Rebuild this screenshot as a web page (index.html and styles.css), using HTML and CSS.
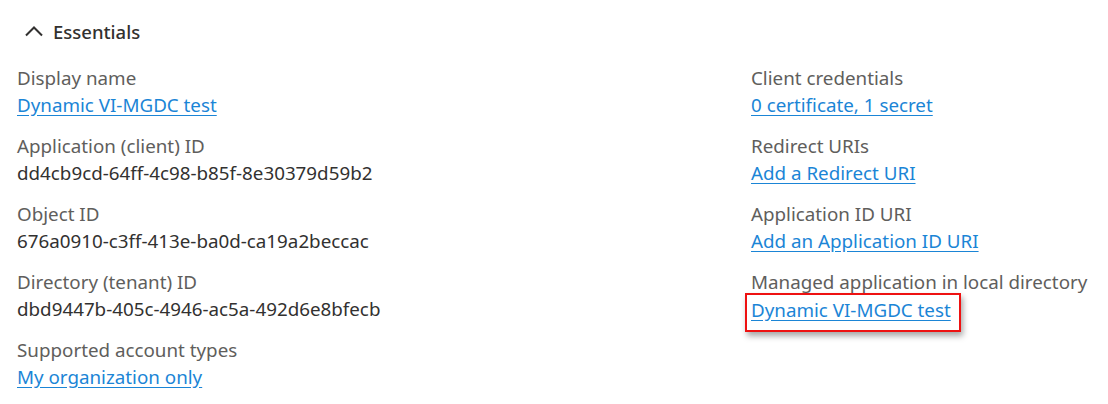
FILE: index.html
```html
<!DOCTYPE html>
<html>
<head>
<meta charset="utf-8">
<link rel="stylesheet" href="styles.css">
</head>
<body>
<div class="panel">
  <div class="header">
    <svg class="chev" width="20" height="12" viewBox="0 0 20 12"><path d="M2 10.5 L10 2.5 L18 10.5" fill="none" stroke="#323130" stroke-width="2"/></svg>
    <span class="title">Essentials</span>
  </div>
  <div class="grid">
    <div class="col">
      <div class="item"><div class="label">Display name</div><a class="link" href="#">Dynamic VI-MGDC test</a></div>
      <div class="item"><div class="label">Application (client) ID</div><div class="value">dd4cb9cd-64ff-4c98-b85f-8e30379d59b2</div></div>
      <div class="item"><div class="label">Object ID</div><div class="value">676a0910-c3ff-413e-ba0d-ca19a2beccac</div></div>
      <div class="item"><div class="label">Directory (tenant) ID</div><div class="value">dbd9447b-405c-4946-ac5a-492d6e8bfecb</div></div>
      <div class="item"><div class="label">Supported account types</div><a class="link" href="#">My organization only</a></div>
    </div>
    <div class="col">
      <div class="item"><div class="label">Client credentials</div><a class="link" href="#">0 certificate, 1 secret</a></div>
      <div class="item"><div class="label">Redirect URIs</div><a class="link" href="#">Add a Redirect URI</a></div>
      <div class="item"><div class="label">Application ID URI</div><a class="link" href="#">Add an Application ID URI</a></div>
      <div class="item"><div class="label">Managed application in local directory</div><span class="highlight"><a class="link" href="#">Dynamic VI-MGDC test</a></span></div>
    </div>
  </div>
</div>
</body>
</html>
```
FILE: styles.css
```css
html, body { margin: 0; padding: 0; background: #fff; }
body { font-family: "Noto Sans", "Open Sans", sans-serif; font-size: 18.8px; color: #323130; }
.panel { padding: 18px 0 0 17px; }
.header { display: flex; align-items: center; height: 26px; padding-left: 7px; gap: 9px; }
.chev { display: block; }
.title { font-size: 18.5px; font-weight: 500; color: #323130; }
.grid { display: grid; grid-template-columns: 734px 1fr; margin-top: 21px; }
.col { display: flex; flex-direction: column; gap: 14px; }
.item { display: flex; flex-direction: column; align-items: flex-start; }
.label { color: #605e5c; line-height: 27px; height: 27px; }
.value { color: #323130; line-height: 27px; height: 27px; }
.link { color: #1b85d6; text-decoration: underline; line-height: 27px; height: 27px; text-underline-offset: 3px; }
.highlight { display: inline-block; margin-left: -6px; margin-top: -3px; padding: 2px 8px 6px 4px; border: 2px solid #ee1111; box-shadow: 2px 4px 6px rgba(0,0,0,0.35); line-height: 27px; }
```
